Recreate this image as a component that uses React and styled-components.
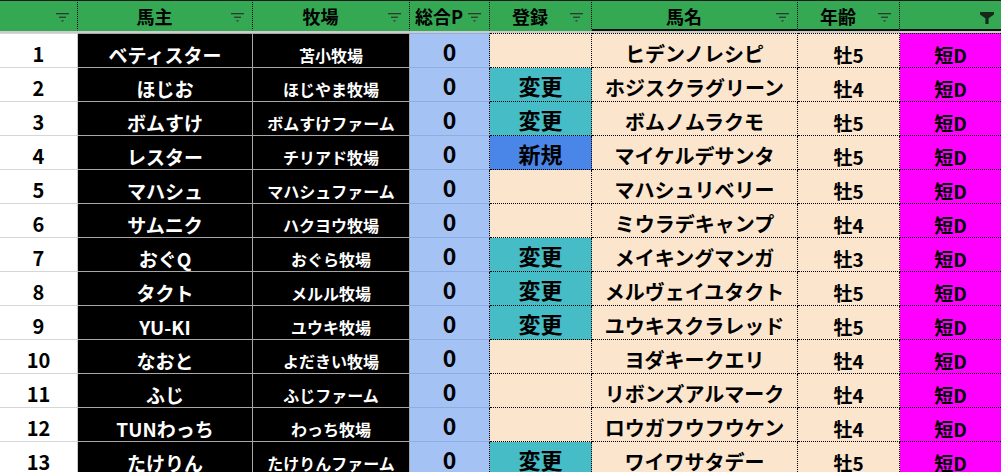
import React from "react";
import styled, { createGlobalStyle, css } from "styled-components";

const GlobalStyle = createGlobalStyle`
  html, body { margin: 0; padding: 0; background: #ffffff; }
  body { font-family: "Noto Sans CJK JP", "Noto Sans", sans-serif; overflow: hidden; }
  * { box-sizing: border-box; }
`;

const GREEN = "#35a853";
const PEACH = "#fce5cd";
const BLUE = "#a4c2f4";
const TEAL = "#46bdc6";
const NEWBLUE = "#4a86e8";
const MAGENTA = "#ff00ff";

const Sheet = styled.div`
  display: grid;
  grid-template-columns: 78px 175px 157px 80px 102px 206px 102px 101px;
  width: 1001px;
`;

const HeaderCell = styled.div`
  display: flex;
  align-items: center;
  height: 31px;
  background: ${GREEN};
  border-top: 1px solid #1c1c1c;
  border-right: ${(p) => (p.$last ? "none" : "1px dotted #000")};
  border-bottom: 2px solid ${(p) => (p.$dark ? "#111" : GREEN)};
`;

const HeaderLabel = styled.div`
  flex: 1;
  text-align: center;
  font-size: 18px;
  line-height: 1;
  font-weight: 700;
  color: #000;
  padding-top: 2px;
  white-space: nowrap;
`;

const FilterBox = styled.div`
  width: 21px;
  display: flex;
  justify-content: flex-start;
  align-items: center;
  padding-top: 5px;
`;

const Band = styled.div`
  grid-column: 1 / -1;
  height: 2px;
  background: #cbcbcb;
`;

const base = css`
  display: flex;
  align-items: center;
  justify-content: center;
  height: ${(p) => (p.$first ? 35 : 34)}px;
  line-height: 1;
  font-weight: 700;
  white-space: nowrap;
  overflow: hidden;
`;

const NumCell = styled.div`
  ${base};
  font-size: 20px;
  color: #000;
  background: #fff;
  padding-top: 6px;
  border-right: 1px solid #c8c8c8;
  border-bottom: 1px solid #d6d6d6;
  border-top: ${(p) => (p.$first ? "1px solid #d6d6d6" : "none")};
`;

const DarkCell = styled.div`
  ${base};
  font-size: ${(p) => p.$size}px;
  padding-top: ${(p) => p.$pt}px;
  color: #fff;
  background: #000;
  border-right: 1px solid #a7a7a7;
  border-bottom: 1px solid #a7a7a7;
  border-top: ${(p) => (p.$first ? "1px solid #a7a7a7" : "none")};
`;

const PointCell = styled.div`
  ${base};
  font-size: 23px;
  padding-top: 1px;
  color: #000;
  background: ${BLUE};
  border-right: 1px dotted #000;
  border-bottom: 1px solid #8eaee3;
  border-top: ${(p) => (p.$first ? "1px solid #8eaee3" : "none")};
`;

const DottedCell = styled.div`
  ${base};
  font-size: ${(p) => p.$size}px;
  padding-top: ${(p) => p.$pt}px;
  color: #000;
  background: ${(p) => p.$bg};
  border-right: ${(p) => (p.$last ? "none" : "1px dotted #000")};
  border-bottom: 1px dotted #000;
  border-top: ${(p) => (p.$first ? "1px dotted #000" : "none")};
`;

const FilterIcon = () => (
  <svg width="13" height="9" viewBox="0 0 13 9">
    <rect x="0" y="0" width="13" height="1.3" fill="#2e3a31" />
    <rect x="3" y="3.6" width="7" height="1.3" fill="#2e3a31" />
    <rect x="5.5" y="7.2" width="2" height="1.3" fill="#2e3a31" />
  </svg>
);

const ActiveFilterIcon = () => (
  <svg width="14" height="12" viewBox="0 0 14 12">
    <path d="M0 0 H14 V2.4 L8.6 6.2 V12 H5.4 V6.2 L0 2.4 Z" fill="#16281a" />
  </svg>
);

const headers = [
  { label: "" },
  { label: "馬主" },
  { label: "牧場" },
  { label: "総合P" },
  { label: "登録" },
  { label: "馬名", dark: true },
  { label: "年齢", dark: true },
  { label: "", dark: true, last: true, active: true },
];

const rows = [
  ["ベティスター", "苫小牧場", "", "ヒデンノレシピ", "牡5"],
  ["ほじお", "ほじやま牧場", "変更", "ホジスクラグリーン", "牡4"],
  ["ボムすけ", "ボムすけファーム", "変更", "ボムノムラクモ", "牡5"],
  ["レスター", "チリアド牧場", "新規", "マイケルデサンタ", "牡5"],
  ["マハシュ", "マハシュファーム", "", "マハシュリベリー", "牡5"],
  ["サムニク", "ハクヨウ牧場", "", "ミウラデキャンプ", "牡4"],
  ["おぐQ", "おぐら牧場", "変更", "メイキングマンガ", "牡3"],
  ["タクト", "メルル牧場", "変更", "メルヴェイユタクト", "牡5"],
  ["YU-KI", "ユウキ牧場", "変更", "ユウキスクラレッド", "牡5"],
  ["なおと", "よだきい牧場", "", "ヨダキークエリ", "牡4"],
  ["ふじ", "ふじファーム", "", "リボンズアルマーク", "牡4"],
  ["TUNわっち", "わっち牧場", "", "ロウガフウフウケン", "牡4"],
  ["たけりん", "たけりんファーム", "変更", "ワイワサタデー", "牡5"],
];

const regColor = (r) => (r === "変更" ? TEAL : r === "新規" ? NEWBLUE : PEACH);

export default function App() {
  return (
    <>
      <GlobalStyle />
      <Sheet>
        {headers.map((h, i) => (
          <HeaderCell key={i} $dark={h.dark} $last={h.last}>
            <HeaderLabel>{h.label}</HeaderLabel>
            <FilterBox>{h.active ? <ActiveFilterIcon /> : <FilterIcon />}</FilterBox>
          </HeaderCell>
        ))}
        <Band />
        {rows.map(([owner, farm, reg, horse, age], i) => {
          const first = i === 0;
          return (
            <React.Fragment key={i}>
              <NumCell $first={first}>{i + 1}</NumCell>
              <DarkCell $first={first} $size={19} $pt={8}>{owner}</DarkCell>
              <DarkCell $first={first} $size={16} $pt={9}>{farm}</DarkCell>
              <PointCell $first={first}>0</PointCell>
              <DottedCell $first={first} $bg={regColor(reg)} $size={22} $pt={0}>{reg}</DottedCell>
              <DottedCell $first={first} $bg={PEACH} $size={20} $pt={7}>{horse}</DottedCell>
              <DottedCell $first={first} $bg={PEACH} $size={19} $pt={8}>{age}</DottedCell>
              <DottedCell $first={first} $bg={MAGENTA} $size={19} $pt={8} $last>短D</DottedCell>
            </React.Fragment>
          );
        })}
      </Sheet>
    </>
  );
}
